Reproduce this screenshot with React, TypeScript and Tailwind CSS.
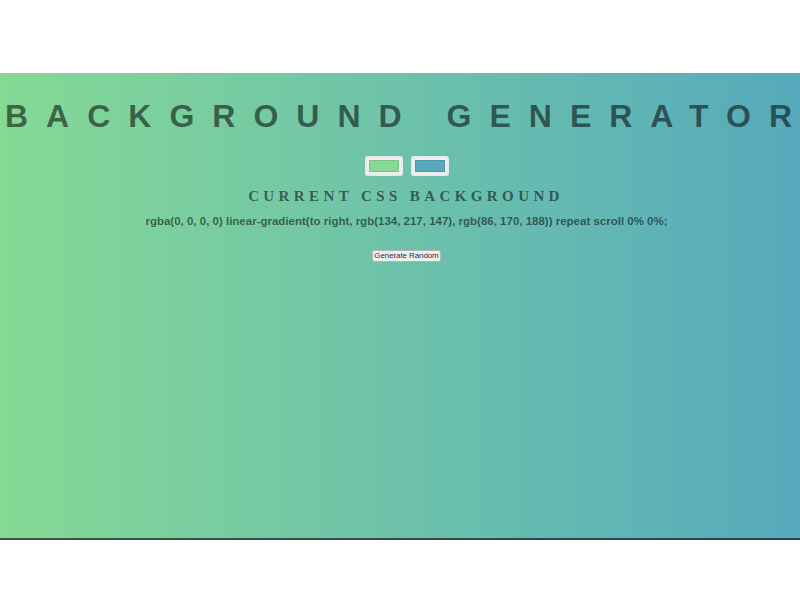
import React from 'react';

const App = () => {
  const css =
    'rgba(0, 0, 0, 0) linear-gradient(to right, rgb(134, 217, 147), rgb(86, 170, 188)) repeat scroll 0% 0%;';

  return (
    <div className="w-[800px] h-[600px] bg-white overflow-hidden pt-[73px]">
      <div className="h-[467px] bg-gradient-to-r from-[rgb(134,217,147)] to-[rgb(86,170,188)] border-b-2 border-black/60 flex flex-col text-black/55">
        <h1 className="mt-[19px] w-full pl-[5px] whitespace-nowrap text-left font-['Liberation_Sans',Arial,sans-serif] font-bold text-[32px] leading-[48px] tracking-[18px]">
          BACKGROUND GENERATO<span className="tracking-normal">R</span>
        </h1>

        <div className="flex flex-col items-center pl-[13px]">
          <div className="mt-[16px] flex gap-[8px]">
            <div className="w-[38px] h-[20px] rounded-[3px] border-2 border-[#e9e9e9] bg-[#efefef] p-[2px]">
              <div className="w-full h-full bg-[rgb(134,217,147)] border border-black/10" />
            </div>
            <div className="w-[38px] h-[20px] rounded-[3px] border-2 border-[#e9e9e9] bg-[#efefef] p-[2px]">
              <div className="w-full h-full bg-[rgb(86,170,188)] border border-black/10" />
            </div>
          </div>

          <h3 className="mt-[10px] font-['Liberation_Serif','Times_New_Roman',serif] font-bold text-[15px] leading-[20px] tracking-[4.4px] pr-[1px]">
            CURRENT CSS BACKGROUND
          </h3>

          <p className="mt-[7px] font-['Liberation_Sans',Arial,sans-serif] font-bold text-[11.5px] leading-[16px] whitespace-nowrap">
            {css}
          </p>

          <button className="mt-[21px] px-[1px] h-[12px] flex items-center bg-[#efefef] border border-[#b5b5b5] rounded-[2px] text-black/85 font-['Liberation_Sans',Arial,sans-serif] text-[8px] leading-none tracking-[-0.1px]">
            Generate Random
          </button>
        </div>
      </div>
    </div>
  );
};

export default App;
